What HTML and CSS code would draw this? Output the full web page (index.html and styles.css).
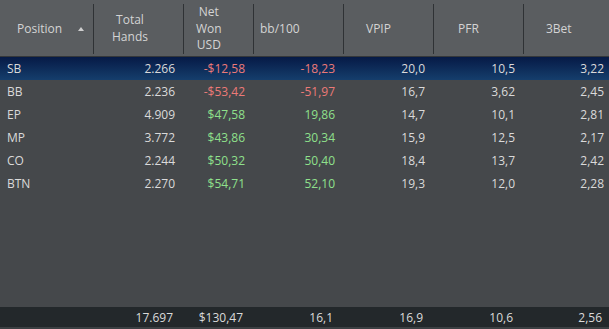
FILE: index.html
```html
<!DOCTYPE html>
<html>
<head>
<meta charset="utf-8">
<link rel="stylesheet" href="styles.css">
</head>
<body>
<div class="grid">
  <div class="head">
    <div class="hc hc-pos"><span class="lbl">Position</span><span class="sort"></span></div>
    <div class="hc hc-hands"><span class="lbl">Total<br>Hands</span></div>
    <div class="hc hc-net"><span class="lbl">Net<br>Won<br>USD</span></div>
    <div class="hc hc-bb"><span class="lbl">bb/100</span></div>
    <div class="hc hc-vpip"><span class="lbl">VPIP</span></div>
    <div class="hc hc-pfr"><span class="lbl">PFR</span></div>
    <div class="hc hc-3bet"><span class="lbl">3Bet</span></div>
  </div>
  <div class="body">
    <div class="row sel">
      <div class="c pos">SB</div><div class="c">2.266</div><div class="c neg">-$12,58</div><div class="c neg">-18,23</div><div class="c">20,0</div><div class="c">10,5</div><div class="c last">3,22</div>
    </div>
    <div class="row">
      <div class="c pos">BB</div><div class="c">2.236</div><div class="c neg">-$53,42</div><div class="c neg">-51,97</div><div class="c">16,7</div><div class="c">3,62</div><div class="c last">2,45</div>
    </div>
    <div class="row">
      <div class="c pos">EP</div><div class="c">4.909</div><div class="c pos-val">$47,58</div><div class="c pos-val">19,86</div><div class="c">14,7</div><div class="c">10,1</div><div class="c last">2,81</div>
    </div>
    <div class="row">
      <div class="c pos">MP</div><div class="c">3.772</div><div class="c pos-val">$43,86</div><div class="c pos-val">30,34</div><div class="c">15,9</div><div class="c">12,5</div><div class="c last">2,17</div>
    </div>
    <div class="row">
      <div class="c pos">CO</div><div class="c">2.244</div><div class="c pos-val">$50,32</div><div class="c pos-val">50,40</div><div class="c">18,4</div><div class="c">13,7</div><div class="c last">2,42</div>
    </div>
    <div class="row">
      <div class="c pos">BTN</div><div class="c">2.270</div><div class="c pos-val">$54,71</div><div class="c pos-val">52,10</div><div class="c">19,3</div><div class="c">12,0</div><div class="c last">2,28</div>
    </div>
  </div>
  <div class="foot">
    <div class="f"></div><div class="f">17.697</div><div class="f">$130,47</div><div class="f">16,1</div><div class="f">16,9</div><div class="f">10,6</div><div class="f last">2,56</div>
  </div>
  <div class="strip"></div>
</div>
</body>
</html>
```
FILE: styles.css
```css
html, body {
  margin: 0;
  padding: 0;
  background: #45484b;
}
body {
  width: 609px;
  height: 329px;
  overflow: hidden;
  font-family: "Open Sans", "Noto Sans", sans-serif;
  font-size: 12px;
  color: #dadada;
}
.grid {
  display: flex;
  flex-direction: column;
  height: 329px;
}
.head, .row, .foot {
  display: grid;
  grid-template-columns: 94px 90px 70px 90px 90px 90px 85px;
}
.head {
  height: 56px;
  background: #5a5d60;
  border-bottom: 1px solid #34373a;
  color: #d4d4d4;
  line-height: 16.7px;
}
.hc {
  display: flex;
  align-items: center;
  margin: 4px 0;
  border-right: 1px solid #2f3235;
  text-align: center;
}
.hc-3bet { border-right: none; }
.hc-pos { padding-left: 17px; padding-right: 9px; }
.hc-pos .sort {
  margin-left: auto;
  width: 0;
  height: 0;
  border-left: 3.5px solid transparent;
  border-right: 3.5px solid transparent;
  border-bottom: 4px solid #cfcfcf;
  margin-top: -1px;
}
.hc-hands { padding-left: 18px; }
.hc-net { padding-left: 12px; }
.hc-bb { padding-left: 6px; }
.hc-vpip { padding-left: 22px; }
.hc-pfr { padding-left: 24px; }
.hc-3bet { padding-left: 22px; }
.body {
  flex: 1;
  background: #45484b;
}
.row {
  height: 23px;
  align-items: center;
}
.row.sel {
  background: linear-gradient(#061a46, #153e6c);
}
.c {
  text-align: right;
  padding-right: 9px;
  white-space: nowrap;
}
.c.pos {
  text-align: left;
  padding-left: 7px;
  padding-right: 0;
}
.c.last { padding-right: 5px; }
.neg { color: #ec7a78; }
.pos-val { color: #8fe08c; }
.foot {
  height: 20px;
  align-items: center;
  background: #23282b;
}
.f {
  text-align: right;
  padding-right: 11px;
}
.f.last { padding-right: 7px; }
.strip {
  height: 2px;
  background: #3c4043;
}
```
